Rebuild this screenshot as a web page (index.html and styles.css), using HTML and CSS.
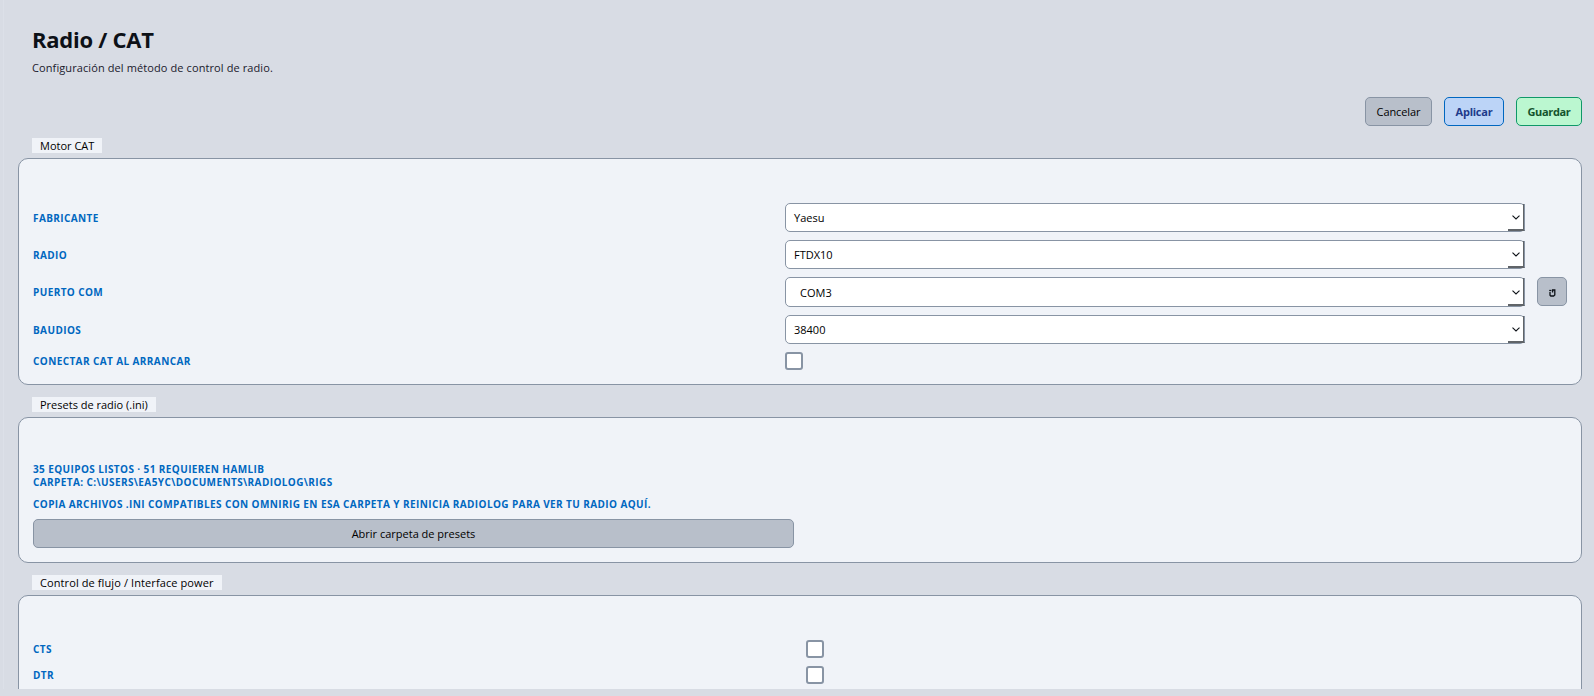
FILE: index.html
```html
<!DOCTYPE html>
<html lang="es">
<head>
    <meta charset="UTF-8">
    <meta name="viewport" content="width=device-width, initial-scale=1.0">
    <title>Radio / CAT</title>
    <link rel="stylesheet" href="styles.css">
</head>
<body>
    <main class="page">
        <header class="header">
            <h1>Radio / CAT</h1>
            <p class="subtitle">Configuración del método de control de radio.</p>
        </header>

        <div class="actions">
            <button type="button" class="btn btn-cancel">Cancelar</button>
            <button type="button" class="btn btn-apply">Aplicar</button>
            <button type="button" class="btn btn-save">Guardar</button>
        </div>

        <section class="group">
            <h2 class="legend legend-motor"><span>Motor CAT</span></h2>
            <div class="panel panel-motor">
                <div class="row">
                    <span class="label">Fabricante</span>
                    <div class="combo"><span>Yaesu</span><svg class="arrow" viewBox="0 0 8 5"><path d="M0.5 0.7L4 4L7.5 0.7"/></svg></div>
                </div>
                <div class="row">
                    <span class="label">Radio</span>
                    <div class="combo"><span>FTDX10</span><svg class="arrow" viewBox="0 0 8 5"><path d="M0.5 0.7L4 4L7.5 0.7"/></svg></div>
                </div>
                <div class="row row-port">
                    <span class="label">Puerto COM</span>
                    <div class="combo combo-port"><span>COM3</span><svg class="arrow" viewBox="0 0 8 5"><path d="M0.5 0.7L4 4L7.5 0.7"/></svg></div>
                    <button type="button" class="btn btn-refresh" aria-label="Actualizar">
                        <svg viewBox="0 0 7 8"><path d="M1 3V6.2L1.8 7H4.6L5.8 6V1H3.6V3.6"/><path d="M0.2 1.5H2.4"/></svg>
                    </button>
                </div>
                <div class="row">
                    <span class="label">Baudios</span>
                    <div class="combo"><span>38400</span><svg class="arrow" viewBox="0 0 8 5"><path d="M0.5 0.7L4 4L7.5 0.7"/></svg></div>
                </div>
                <div class="row row-check">
                    <span class="label">Conectar CAT al arrancar</span>
                    <input type="checkbox" class="check">
                </div>
            </div>
        </section>

        <section class="group">
            <h2 class="legend legend-presets"><span>Presets de radio (.ini)</span></h2>
            <div class="panel panel-presets">
                <p class="label info">35 equipos listos · 51 requieren Hamlib<br>Carpeta: C:\Users\EA5YC\Documents\RadioLog\rigs</p>
                <p class="label info">Copia archivos .ini compatibles con OmniRig en esa carpeta y reinicia RadioLog para ver tu radio aquí.</p>
                <button type="button" class="btn btn-folder">Abrir carpeta de presets</button>
            </div>
        </section>

        <section class="group">
            <h2 class="legend legend-flow"><span>Control de flujo / Interface power</span></h2>
            <div class="panel panel-flow">
                <div class="row row-check">
                    <span class="label">CTS</span>
                    <input type="checkbox" class="check">
                </div>
                <div class="row row-check">
                    <span class="label">DTR</span>
                    <input type="checkbox" class="check">
                </div>
            </div>
        </section>
    </main>
</body>
</html>
```
FILE: styles.css
```css
* {
    box-sizing: border-box;
}

body {
    margin: 0;
    height: 696px;
    padding-left: 3px;
    overflow: hidden;
    font-family: "Open Sans", "Noto Sans", sans-serif;
    font-size: 11px;
    color: #000;
    background-color: #d8dce4;
}

/* Area con scroll, cortada abajo */
.page {
    height: 689px;
    padding: 23px 12px 0 14px;
    overflow: hidden;
    border-left: 1px solid #dce0e8;
}

h1, h2, p {
    margin: 0;
}

/* Cabecera */
.header {
    height: 74px;
    padding-left: 14px;
}

h1 {
    font-size: 22px;
    line-height: 32px;
    letter-spacing: -0.25px;
    color: #0d1117;
}

.subtitle {
    margin-top: 5px;
    line-height: 16px;
    letter-spacing: 0.1px;
    color: #1a202c;
}

/* Botones */
.actions {
    display: flex;
    justify-content: flex-end;
    gap: 12px;
    margin-bottom: 12px;
}

.btn {
    height: 29px;
    padding: 0;
    font-family: inherit;
    font-size: 11px;
    color: #000;
    background-color: #b8bfca;
    border: 1px solid #8894a4;
    border-radius: 5px;
}

.btn-cancel {
    width: 67px;
    letter-spacing: -0.1px;
}

.btn-apply {
    width: 60px;
    font-weight: bold;
    letter-spacing: -0.25px;
    color: #1e3a8a;
    background-color: #bcd4f7;
    border-color: #0067c0;
}

.btn-save {
    width: 66px;
    font-weight: bold;
    letter-spacing: -0.35px;
    color: #14532d;
    background-color: #bbf7d0;
    border-color: #0f9868;
}

/* Grupos */
.group {
    margin-bottom: 12px;
}

.legend {
    width: 70px;
    height: 15px;
    margin: 0 0 5px 14px;
    padding-left: 8px;
    font-size: 11px;
    font-weight: normal;
    line-height: 15px;
    white-space: nowrap;
    background-color: #f0f3f8;
}

.legend-presets {
    width: 124px;
}

.legend-flow {
    width: 190px;
    letter-spacing: 0.1px;
}

.panel {
    padding: 44px 14px 0;
    background-color: #f0f3f8;
    border: 1px solid #8894a4;
    border-radius: 10px;
}

.panel-motor {
    display: flex;
    flex-direction: column;
    gap: 8px;
    height: 227px;
}

.row {
    display: grid;
    grid-template-columns: 740px 740px 30px;
    column-gap: 12px;
    align-items: center;
    height: 29px;
}

.row-port {
    height: 30px;
    align-items: start;
}

.row-port .label {
    line-height: 31px;
}

.row-check {
    height: 18px;
}

.label {
    font-size: 10px;
    font-weight: bold;
    letter-spacing: 0.4px;
    text-transform: uppercase;
    white-space: nowrap;
    color: #0067c0;
}

/* Desplegables */
.combo {
    display: flex;
    align-items: center;
    justify-content: space-between;
    position: relative;
    height: 29px;
    padding: 0 4px 0 8px;
    background-color: #fff;
    border: 1px solid #8894a4;
    border-radius: 5px;
}

.combo-port {
    height: 30px;
    padding-left: 14px;
}

/* Relieve del boton desplegable */
.combo::after {
    content: "";
    position: absolute;
    right: -1px;
    top: 0;
    bottom: 0;
    width: 16px;
    border-right: 1px solid #8894a4;
    border-bottom: 1px solid #606468;
    box-shadow: inset -1px -1px 0 #606468;
}

.arrow {
    width: 8px;
    height: 5px;
    fill: none;
    stroke: #0d1117;
    stroke-width: 1.1;
}

.btn-refresh {
    display: flex;
    align-items: center;
    justify-content: center;
    width: 30px;
}

.btn-refresh svg {
    width: 7px;
    height: 8px;
    margin-top: 2px;
    fill: none;
    stroke: #0d1117;
    stroke-width: 1.3;
}

.check {
    appearance: none;
    width: 18px;
    height: 18px;
    margin: 0;
    background-color: #fff;
    border: 2px solid #8894a4;
    border-radius: 3px;
}

/* Presets */
.panel-presets {
    height: 146px;
    padding-top: 45px;
}

.info {
    margin-bottom: 9px;
    line-height: 13px;
}

.btn-folder {
    display: block;
    width: 761px;
    margin-top: -1px;
}

/* Control de flujo */
.panel-flow {
    display: flex;
    flex-direction: column;
    gap: 8px;
    height: 160px;
}

.panel-flow .row {
    grid-template-columns: 761px 740px;
}
```
